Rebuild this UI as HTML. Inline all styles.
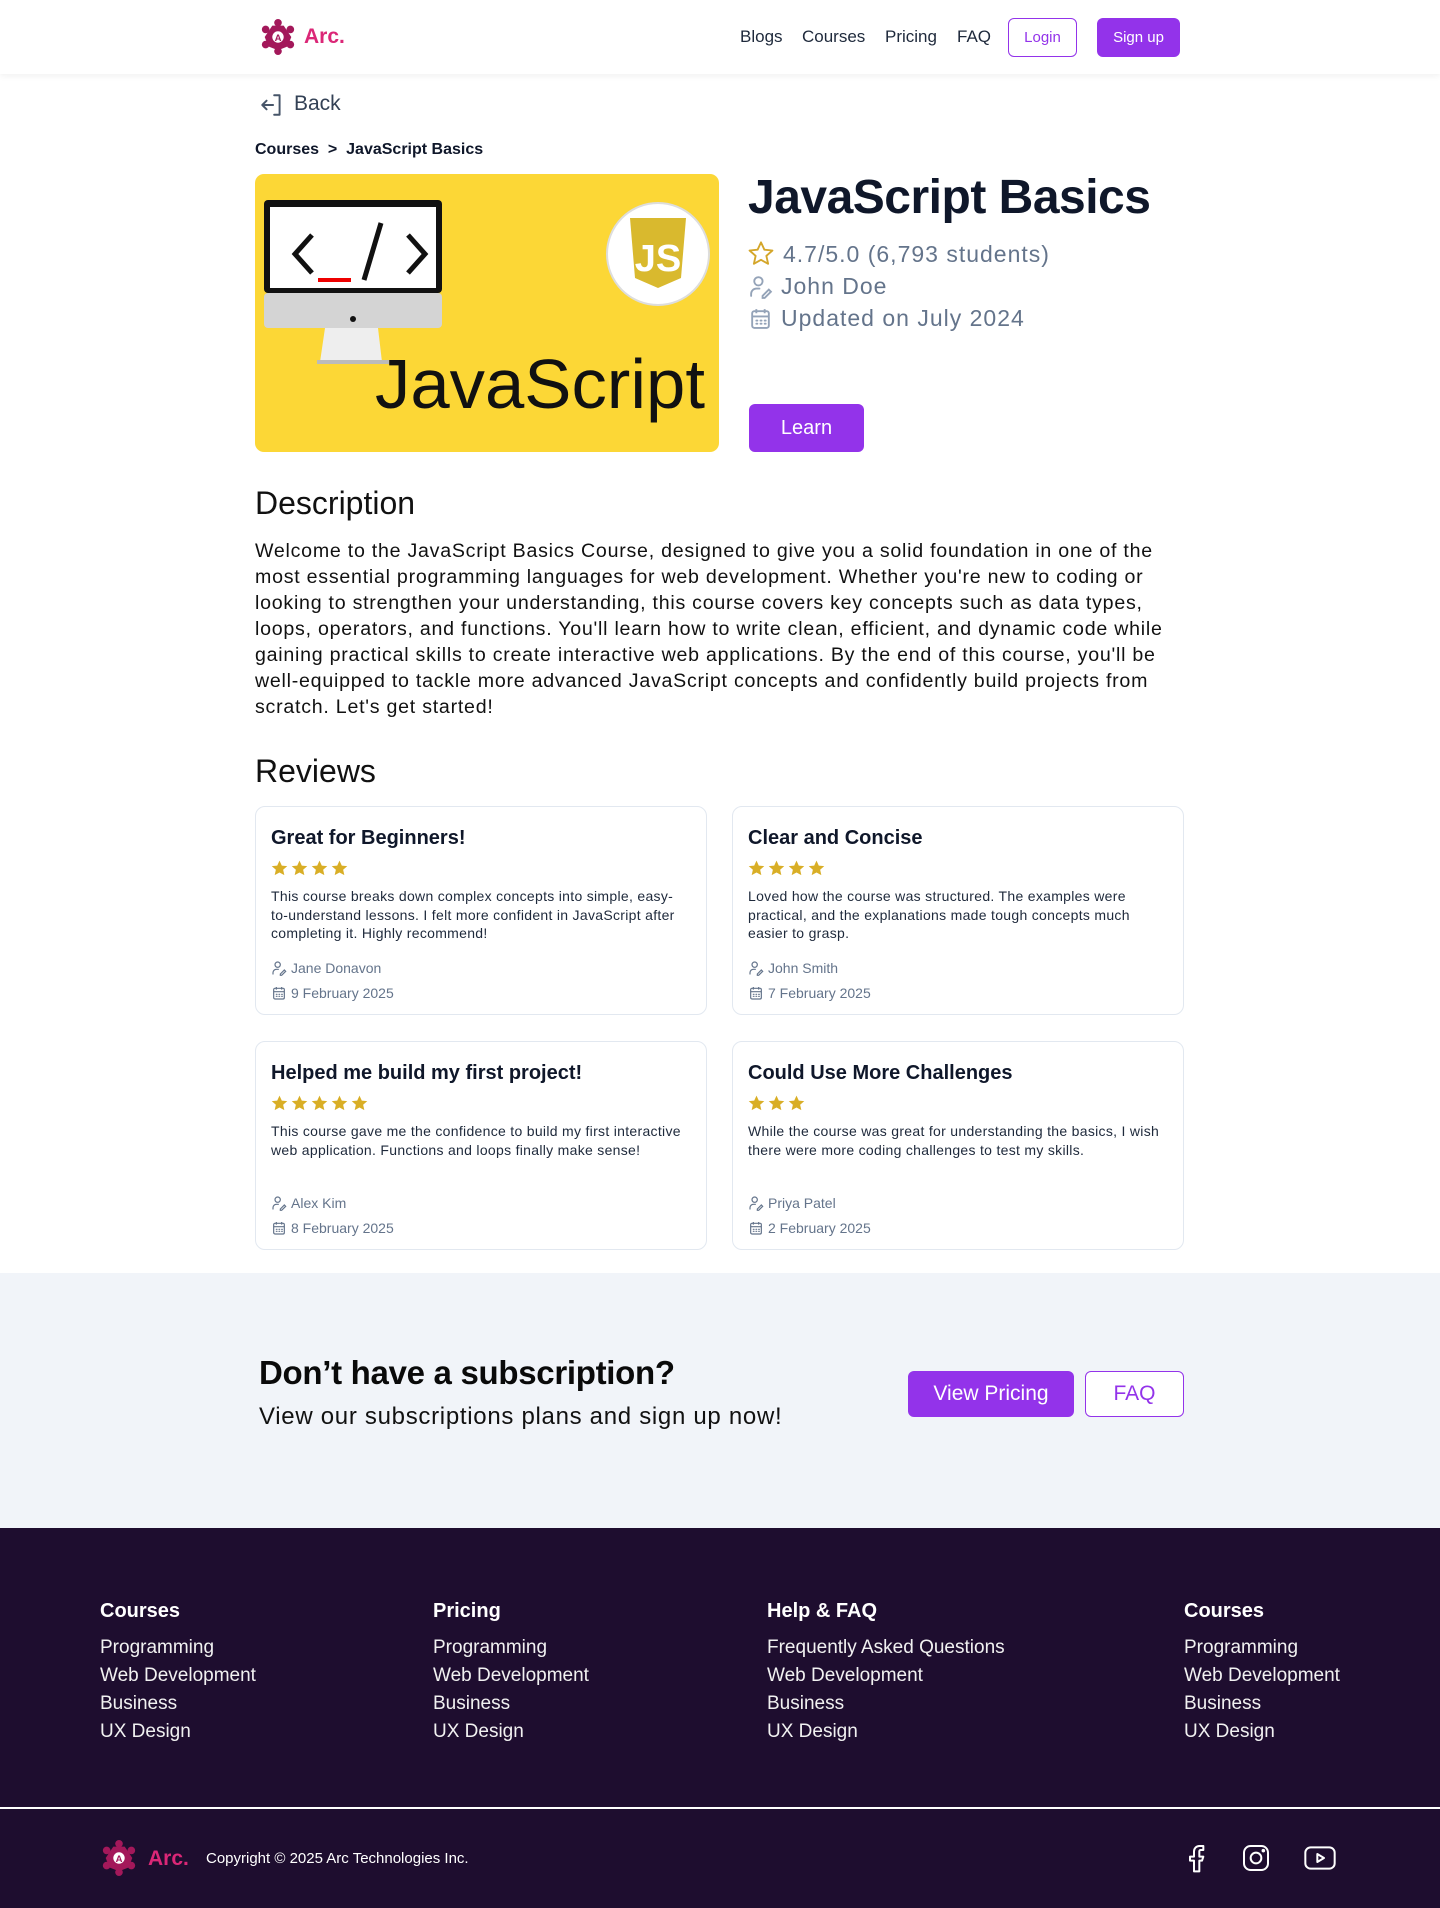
<!DOCTYPE html>
<html><head><meta charset="utf-8"><style>
*{margin:0;padding:0;box-sizing:border-box}
body{width:1440px;height:1908px;position:relative;background:#fff;font-family:"Liberation Sans",sans-serif;color:#0f172a;overflow:hidden}
.a{position:absolute;white-space:nowrap}
.hdr{position:absolute;left:0;top:0;width:1440px;height:74px;background:#fff;box-shadow:0 2px 6px rgba(0,0,0,.06)}
.nav{font-size:17px;color:#1e293b;top:27px}
.btn{position:absolute;border-radius:6px;display:flex;align-items:center;justify-content:center}
.card{position:absolute;width:452px;height:209px;border:1px solid #e2e8f0;border-radius:10px;background:#fff}
.card .t{position:absolute;left:15px;top:20px;font-size:20px;font-weight:bold;color:#0f172a;white-space:nowrap}
.card .s{position:absolute;left:14px;top:52px;display:flex;gap:1px}
.card .p{position:absolute;left:15px;top:80px;font-size:14px;line-height:18.5px;color:#1e293b;white-space:nowrap;letter-spacing:0.3px}
.card .m{position:absolute;left:15px;font-size:14px;color:#64748b;display:flex;align-items:center;gap:4px;white-space:nowrap}
.desc{font-size:19.6px;line-height:26px;color:#111;letter-spacing:0.75px}
.ft h4{font-size:20px;font-weight:bold;color:#fff;position:absolute;top:1600px;white-space:nowrap}
.ft div{font-size:19px;color:#f1f1f1;position:absolute;white-space:nowrap}
</style></head><body>
<svg width="0" height="0" style="position:absolute"><defs>
<symbol id="star" viewBox="0 0 24 24"><path d="M12 2l2.9 6.3 6.9.7-5.2 4.6 1.5 6.8L12 17l-6.1 3.4 1.5-6.8L2.2 9l6.9-.7z"/></symbol>
<symbol id="user" viewBox="0 0 24 24"><g fill="none" stroke="currentColor" stroke-width="1.8" stroke-linecap="round"><circle cx="10" cy="7" r="4"/><path d="M3 21v-2a5 5 0 0 1 5-5h3"/><path d="M14 21l6-6 2 2-6 6h-2z"/></g></symbol>
<symbol id="cal" viewBox="0 0 24 24"><g fill="none" stroke="currentColor" stroke-width="1.8"><rect x="4" y="5" width="16" height="16" rx="2"/><path d="M4 10h16M8 3v4M16 3v4"/><path d="M8 14h1M12 14h1M16 14h1M8 17h1M12 17h1M16 17h1" stroke-linecap="round"/></g></symbol>
<symbol id="logo" viewBox="0 0 40 40"><g fill="#a3185a"><circle cx="20" cy="5" r="4"/><circle cx="33" cy="12" r="4"/><circle cx="33" cy="28" r="4"/><circle cx="20" cy="35" r="4"/><circle cx="7" cy="28" r="4"/><circle cx="7" cy="12" r="4"/><path d="M14 8l12 0 8 12-4 10-10 4-10-4-4-10z"/></g><circle cx="20" cy="20" r="6" fill="#fff"/><text x="20" y="24" font-size="10" text-anchor="middle" fill="#a3185a" font-family="Liberation Sans" font-weight="bold">A</text></symbol>
</defs></svg>

<div class="hdr"></div>
<svg class="a" style="left:259px;top:18px" width="38" height="38"><use href="#logo"/></svg>
<div class="a" style="left:304px;top:25px;font-size:21px;font-weight:bold;color:#db2777">Arc.</div>
<div class="a nav" style="left:740px">Blogs</div>
<div class="a nav" style="left:802px">Courses</div>
<div class="a nav" style="left:885px">Pricing</div>
<div class="a nav" style="left:957px">FAQ</div>
<div class="btn" style="left:1008px;top:18px;width:69px;height:39px;border:1px solid #9333ea;color:#9333ea;font-size:15px">Login</div>
<div class="btn" style="left:1097px;top:18px;width:83px;height:39px;background:#9333ea;color:#fff;font-size:15px">Sign up</div>

<svg class="a" style="left:259px;top:92px" width="26" height="26" viewBox="0 0 24 24" fill="none" stroke="#475569" stroke-width="1.8" stroke-linecap="round" stroke-linejoin="round"><path d="M14 3h5v18h-5"/><path d="M13 12H4M7 8l-4 4 4 4"/></svg>
<div class="a" style="left:294px;top:92px;font-size:21px;color:#334155">Back</div>
<div class="a" style="left:255px;top:141px;font-size:16px;font-weight:bold;color:#0f172a">Courses &nbsp;&gt;&nbsp; JavaScript Basics</div>

<svg class="a" style="left:255px;top:174px" width="464" height="278" viewBox="0 0 464 278">
<rect width="464" height="278" rx="9" fill="#fcd736"/>
<rect x="9" y="26" width="178" height="93" rx="4" fill="#111"/>
<rect x="15" y="33" width="166" height="81" fill="#fff"/>
<rect x="9" y="119" width="178" height="35" rx="4" fill="#d4d4d4"/>
<circle cx="98" cy="145" r="3" fill="#111"/>
<path d="M70 154h53l4 34H65z" fill="#eee"/><rect x="62" y="186" width="72" height="4" fill="#bbb"/>
<path d="M57 61L40 80l17 19M153 61l17 19-17 19M126 49l-17 57" stroke="#111" stroke-width="5" fill="none"/>
<rect x="63" y="104" width="33" height="4" fill="#e00"/>
<circle cx="403" cy="80" r="51" fill="#fff" stroke="#ddd" stroke-width="2"/>
<path d="M375 44h56l-5 60-23 10-23-10z" fill="#d9b92e"/>
<text x="403" y="97" font-size="38" font-weight="bold" text-anchor="middle" fill="#fff" font-family="Liberation Sans">JS</text>
<text x="120" y="234" font-size="70" textLength="330" lengthAdjust="spacingAndGlyphs" fill="#111" font-family="Liberation Sans">JavaScript</text>
</svg>

<div class="a" style="left:748px;top:170px;font-size:48px;font-weight:bold;color:#0f172a;letter-spacing:-0.5px">JavaScript Basics</div>
<svg class="a" style="left:747px;top:240px" width="28" height="28" viewBox="0 0 24 24"><path d="M12 2l2.9 6.3 6.9.7-5.2 4.6 1.5 6.8L12 17l-6.1 3.4 1.5-6.8L2.2 9l6.9-.7z" fill="none" stroke="#d4a62a" stroke-width="1.6" stroke-linejoin="round"/></svg>
<div class="a" style="left:783px;top:241px;font-size:23px;color:#64748b;letter-spacing:1px">4.7/5.0 (6,793 students)</div>
<svg class="a" style="left:748px;top:274px;color:#94a3b8" width="25" height="25"><use href="#user"/></svg>
<div class="a" style="left:781px;top:273px;font-size:23px;color:#64748b;letter-spacing:1px">John Doe</div>
<svg class="a" style="left:748px;top:306px;color:#94a3b8" width="25" height="25"><use href="#cal"/></svg>
<div class="a" style="left:781px;top:305px;font-size:23px;color:#64748b;letter-spacing:1px">Updated on July 2024</div>
<div class="btn" style="left:749px;top:404px;width:115px;height:48px;background:#9333ea;color:#fff;font-size:20px">Learn</div>

<div class="a" style="left:255px;top:485px;font-size:32px;color:#111">Description</div>
<div class="a desc" style="left:255px;top:538px">Welcome to the JavaScript Basics Course, designed to give you a solid foundation in one of the<br>most essential programming languages for web development. Whether you're new to coding or<br>looking to strengthen your understanding, this course covers key concepts such as data types,<br>loops, operators, and functions. You'll learn how to write clean, efficient, and dynamic code while<br>gaining practical skills to create interactive web applications. By the end of this course, you'll be<br>well-equipped to tackle more advanced JavaScript concepts and confidently build projects from<br>scratch. Let's get started!</div>

<div class="a" style="left:255px;top:753px;font-size:32px;color:#111">Reviews</div>

<div class="card" style="left:255px;top:806px">
<div class="t">Great for Beginners!</div>
<div class="s"><svg width="19" height="19" fill="#d9ae26"><use href="#star"/></svg><svg width="19" height="19" fill="#d9ae26"><use href="#star"/></svg><svg width="19" height="19" fill="#d9ae26"><use href="#star"/></svg><svg width="19" height="19" fill="#d9ae26"><use href="#star"/></svg></div>
<div class="p">This course breaks down complex concepts into simple, easy-<br>to-understand lessons. I felt more confident in JavaScript after<br>completing it. Highly recommend!</div>
<div class="m" style="top:153px"><svg width="16" height="16" style="color:#64748b"><use href="#user"/></svg>Jane Donavon</div>
<div class="m" style="top:178px"><svg width="16" height="16" style="color:#64748b"><use href="#cal"/></svg>9 February 2025</div>
</div>
<div class="card" style="left:732px;top:806px">
<div class="t">Clear and Concise</div>
<div class="s"><svg width="19" height="19" fill="#d9ae26"><use href="#star"/></svg><svg width="19" height="19" fill="#d9ae26"><use href="#star"/></svg><svg width="19" height="19" fill="#d9ae26"><use href="#star"/></svg><svg width="19" height="19" fill="#d9ae26"><use href="#star"/></svg></div>
<div class="p">Loved how the course was structured. The examples were<br>practical, and the explanations made tough concepts much<br>easier to grasp.</div>
<div class="m" style="top:153px"><svg width="16" height="16" style="color:#64748b"><use href="#user"/></svg>John Smith</div>
<div class="m" style="top:178px"><svg width="16" height="16" style="color:#64748b"><use href="#cal"/></svg>7 February 2025</div>
</div>
<div class="card" style="left:255px;top:1041px">
<div class="t">Helped me build my first project!</div>
<div class="s"><svg width="19" height="19" fill="#d9ae26"><use href="#star"/></svg><svg width="19" height="19" fill="#d9ae26"><use href="#star"/></svg><svg width="19" height="19" fill="#d9ae26"><use href="#star"/></svg><svg width="19" height="19" fill="#d9ae26"><use href="#star"/></svg><svg width="19" height="19" fill="#d9ae26"><use href="#star"/></svg></div>
<div class="p">This course gave me the confidence to build my first interactive<br>web application. Functions and loops finally make sense!</div>
<div class="m" style="top:153px"><svg width="16" height="16" style="color:#64748b"><use href="#user"/></svg>Alex Kim</div>
<div class="m" style="top:178px"><svg width="16" height="16" style="color:#64748b"><use href="#cal"/></svg>8 February 2025</div>
</div>
<div class="card" style="left:732px;top:1041px">
<div class="t">Could Use More Challenges</div>
<div class="s"><svg width="19" height="19" fill="#d9ae26"><use href="#star"/></svg><svg width="19" height="19" fill="#d9ae26"><use href="#star"/></svg><svg width="19" height="19" fill="#d9ae26"><use href="#star"/></svg></div>
<div class="p">While the course was great for understanding the basics, I wish<br>there were more coding challenges to test my skills.</div>
<div class="m" style="top:153px"><svg width="16" height="16" style="color:#64748b"><use href="#user"/></svg>Priya Patel</div>
<div class="m" style="top:178px"><svg width="16" height="16" style="color:#64748b"><use href="#cal"/></svg>2 February 2025</div>
</div>

<div class="a" style="left:0;top:1273px;width:1440px;height:255px;background:#f1f4f9"></div>
<div class="a" style="left:259px;top:1354px;font-size:33px;font-weight:bold;color:#0a0a0a;letter-spacing:-0.3px">Don’t have a subscription?</div>
<div class="a" style="left:259px;top:1403px;font-size:24px;color:#111;letter-spacing:0.7px">View our subscriptions plans and sign up now!</div>
<div class="btn" style="left:908px;top:1371px;width:166px;height:46px;background:#9333ea;color:#fff;font-size:21px">View Pricing</div>
<div class="btn" style="left:1085px;top:1371px;width:99px;height:46px;border:1px solid #9333ea;color:#9333ea;font-size:21px;background:#fff">FAQ</div>

<div class="a ft" style="left:0;top:1528px;width:1440px;height:380px;background:#1e0d2f"></div>
<div class="ft">
<h4 style="left:100px">Courses</h4><h4 style="left:433px">Pricing</h4><h4 style="left:767px">Help &amp; FAQ</h4><h4 style="left:1184px">Courses</h4>
<div style="left:100px;top:1637px">Programming</div><div style="left:100px;top:1665px">Web Development</div><div style="left:100px;top:1693px">Business</div><div style="left:100px;top:1721px">UX Design</div>
<div style="left:433px;top:1637px">Programming</div><div style="left:433px;top:1665px">Web Development</div><div style="left:433px;top:1693px">Business</div><div style="left:433px;top:1721px">UX Design</div>
<div style="left:767px;top:1637px">Frequently Asked Questions</div><div style="left:767px;top:1665px">Web Development</div><div style="left:767px;top:1693px">Business</div><div style="left:767px;top:1721px">UX Design</div>
<div style="left:1184px;top:1637px">Programming</div><div style="left:1184px;top:1665px">Web Development</div><div style="left:1184px;top:1693px">Business</div><div style="left:1184px;top:1721px">UX Design</div>
</div>
<div class="a" style="left:0;top:1807px;width:1440px;height:2px;background:#fff"></div>
<svg class="a" style="left:100px;top:1839px" width="38" height="38"><use href="#logo"/></svg>
<div class="a" style="left:148px;top:1847px;font-size:21px;font-weight:bold;color:#db2777">Arc.</div>
<div class="a" style="left:206px;top:1850px;font-size:15px;color:#fff">Copyright © 2025 Arc Technologies Inc.</div>
<svg class="a" style="left:1182px;top:1842px" width="32" height="32" viewBox="0 0 24 24" fill="none" stroke="#fff" stroke-width="1.5" stroke-linejoin="round"><path d="M9 22v-8H6v-3h3V7a4 4 0 0 1 4-4h3v3h-2a1 1 0 0 0-1 1v4h3l-1 3h-2v8z"/></svg>
<svg class="a" style="left:1240px;top:1842px" width="32" height="32" viewBox="0 0 24 24" fill="none" stroke="#fff" stroke-width="1.5"><rect x="3" y="3" width="18" height="18" rx="5"/><circle cx="12" cy="12" r="4"/><circle cx="17.5" cy="6.5" r=".6" fill="#fff"/></svg>
<svg class="a" style="left:1302px;top:1842px" width="36" height="32" viewBox="0 0 26 24" fill="none" stroke="#fff" stroke-width="1.5" stroke-linejoin="round"><rect x="2" y="4" width="22" height="16" rx="4"/><path d="M11 9l5 3-5 3z"/></svg>
</body></html>
